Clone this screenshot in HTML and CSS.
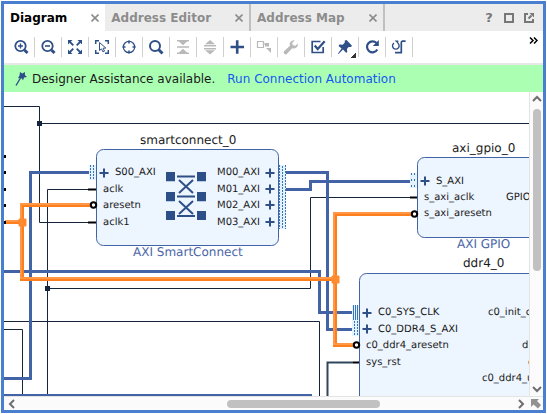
FILE: index.html
```html
<!DOCTYPE html>
<html lang="en">
<head>
<meta charset="utf-8">
<title>Block Design</title>
<link rel="stylesheet" href="styles.css">
</head>
<body>
<main class="panel">
  <header class="tabbar">
    <div class="tab tab-active"><button class="tab-name">Diagram</button><button class="close" aria-label="Close Diagram"><svg width="8" height="8"><path d="M.5 .5l7 7M7.500 .5l-7 7"/></svg></button></div>
    <div class="tab"><button class="tab-name">Address Editor</button><button class="close" aria-label="Close Address Editor"><svg width="8" height="8"><path d="M.5 .5l7 7M7.500 .5l-7 7"/></svg></button></div>
    <div class="tab"><button class="tab-name">Address Map</button><button class="close" aria-label="Close Address Map"><svg width="8" height="8"><path d="M.5 .5l7 7M7.500 .5l-7 7"/></svg></button></div>
    <div class="window-tools">
      <button aria-label="Help">?</button>
      <button aria-label="Maximize"><svg width="10" height="10"><path d="M1 1h8v8H1z"/></svg></button>
      <button aria-label="Float"><svg width="10" height="10"><path d="M4 1H1v8h8V6M4.500 5.500l3-3"/><path class="solid" d="M5.500 0H10v4.500z"/></svg></button>
    </div>
  </header>

  <div class="toolbar" role="toolbar" aria-label="Diagram tools">
    <button class="tool" aria-label="Zoom in"><svg viewBox="0 0 20 20"><circle cx="9.500" cy="9" r="5.200" stroke-width="1.800"/><path d="M7 9h5M9.500 6.500v5" stroke-width="1.400"/><path d="M13.500 13l3 3" stroke-width="3"/></svg></button>
    <button class="tool" aria-label="Zoom out"><svg viewBox="0 0 20 20"><circle cx="9.500" cy="9" r="5.200" stroke-width="1.800"/><path d="M7 9h5" stroke-width="1.600"/><path d="M13.500 13l3 3" stroke-width="3"/></svg></button>
    <button class="tool" aria-label="Zoom fit"><svg viewBox="0 0 20 20"><path class="solid" d="M3 3h4.500L3 7.500zM17 3v4.500L12.500 3zM3 17v-4.500L7.500 17zM17 17h-4.500l4.500-4.500z"/><path d="M4 4l4.300 4.300M16 4l-4.300 4.300M4 16l4.300-4.300M16 16l-4.300-4.300" stroke-width="1.800"/></svg></button>
    <button class="tool" aria-label="Select area"><svg viewBox="0 0 20 20"><path d="M3.700 7V3.700H7M13 3.700h3.300V7M16.300 13v3.300H13M7 16.300H3.700V13" stroke-width="1.500"/><path d="M7.500 5.500v8l2-1.600 1.500 3 1.500-.8-1.400-2.800 2.700-.3z" stroke-width="1"/></svg></button>
    <button class="tool" aria-label="Center selection"><svg viewBox="0 0 20 20"><circle cx="10" cy="10" r="5.700" stroke-width="1.200"/><path d="M10 3.500v3M10 13.500v3M3.500 10h3M13.500 10h3" stroke-width="1.600"/></svg></button>
    <button class="tool" aria-label="Search"><svg viewBox="0 0 20 20"><circle cx="9" cy="9" r="5" stroke-width="2"/><path d="M12.500 12.500l4 4" stroke-width="3"/></svg></button>
    <button class="tool" aria-label="Collapse" disabled><svg viewBox="0 0 20 20"><path d="M4 10h12" stroke-width="1.500"/><path class="solid" d="M4 3h12v1.500h-2L10 8.300 6 4.500H4zM4 17h12v-1.500h-2L10 11.700 6 15.500H4z"/></svg></button>
    <button class="tool" aria-label="Expand" disabled><svg viewBox="0 0 20 20"><path d="M4 8.800h12M4 11.800h12" stroke-width="1.500"/><path class="solid" d="M10 3l5 4.300H5zM10 17.500l5-4.300H5z"/></svg></button>
    <button class="tool" aria-label="Add IP"><svg viewBox="0 0 20 20"><path d="M3.500 10h13.500M10.200 3.300v13.500" stroke-width="2.600"/></svg></button>
    <button class="tool" aria-label="Add module" disabled><svg viewBox="0 0 20 20"><path d="M3.500 4.500h6v6h-6zM9.500 7h2" stroke-width="1.200"/><path class="solid" d="M11 6h4v3.500h-4zM12 11h5v5l-1.700-1.700-1.300-1.300z"/></svg></button>
    <button class="tool" aria-label="Customize block" disabled><svg viewBox="0 0 20 20"><path class="solid" d="M12.800 3.200a4.200 4.200 0 0 0-3.900 5.600L3.300 14a1.900 1.900 0 0 0 2.700 2.700l5.200-5.500a4.200 4.200 0 0 0 5.700-4.600l-2.500 2.200-2.600-.6-.6-2.500 2.500-2.300z"/></svg></button>
    <button class="tool" aria-label="Validate design"><svg viewBox="0 0 20 20"><path d="M12.500 4.500h-8.300v11h11V10" stroke-width="1.700"/><path d="M6.700 8.500l3 3.500 7-7.700" stroke-width="2.200"/></svg></button>
    <button class="tool tool-menu" aria-label="Pin blocks"><svg viewBox="0 0 20 20"><path class="solid" d="M9.800 3.500L11.500 3l5.300 5.500-.6 1.600-2.600-.1-1.700 2 .4 3-1.200.8-3.100-3.200L3.500 17 3 16.400l3.600-4.900-3-2.600.8-1.300 3.300.1 2-2z"/></svg></button>
    <button class="tool" aria-label="Regenerate layout"><svg viewBox="0 0 20 20"><path d="M14.500 6A5.500 5.500 0 1 0 15.300 12.500" stroke-width="2.200"/><path class="solid" d="M16.800 3v6h-6z"/></svg></button>
    <button class="tool" aria-label="Optimize routing"><svg viewBox="0 0 20 20"><path d="M8.800 6.200A3.300 3.300 0 1 1 5 6.100" stroke-width="1.400"/><path class="solid" d="M5.500 3.500h3.800V7z"/><path d="M6 15.700h6.300V5.500a1.300 1.300 0 0 1 1.300-1.300h3" stroke-width="1.700"/></svg></button>
    <button class="more" aria-label="More tools"><svg width="9" height="7"><path d="M1 .5l3 3-3 3M5 .5l3 3-3 3"/></svg></button>
  </div>

  <div class="banner">
    <svg class="wand" width="14" height="16"><path class="solid" d="M6 1l2.200 1.500L11 1l-.1 3 2.100 2-2.900.5L9 9.200 7.200 7 4 7.300 5.500 4.600z"/><path d="M6.500 7L2 14.500" stroke-width="1.400"/></svg>
    <span>Designer Assistance available.</span>
    <a href="#">Run Connection Automation</a>
  </div>

  <section class="view">
    <svg class="canvas" role="img" aria-label="Block design diagram">
      <defs>
        <path id="plus" d="M-4.500 0h9M0-4.500v9"/>
      </defs>
      <g transform="translate(-4 -92)">
        <g class="block">
          <rect x="96.500" y="149.500" width="182" height="96" rx="7"/>
          <rect x="417.500" y="157.500" width="200" height="80" rx="7"/>
          <rect x="359.500" y="273.500" width="240" height="200" rx="7"/>
        </g>

        <g class="net">
          <path d="M4 106.500h35.500v116H90M39.500 123.500H529"/>
          <path d="M90 189.500H47.500V396M47.500 288.500h263v-91H411"/>
          <path d="M4 321.500h315.500V396M4 329.500h18.500V396"/>
          <path class="reset" d="M353 362.500h-25.500V396"/>
        </g>
        <path class="joint" d="M37 121h5v5h-5zM45 286h5v5h-5z"/>

        <g class="bus">
          <path d="M89 172.500H30.500v206H4"/>
          <path d="M4 271.500h315.500v41H353"/>
          <path d="M286 172.500h41.500v157H353"/>
          <path d="M286 189.500h24.500v-8H410"/>
          <path class="edge" d="M4 395h308"/>
        </g>

        <g class="selected">
          <path d="M90 205H22v74h313M5 222h17M411 214h-76v131h19"/>
          <path class="shine" d="M90 204H21v74h313M5 221h17M411 213h-77v131h19"/>
          <path class="node" d="M19 219h7v7h-7zM332 276h7v7h-7z"/>
        </g>

        <g class="pin">
          <path d="M88 189.500h8M88 222.500h8M410 197.500h7M353 362.500h6"/>
          <path class="stub" d="M4 156.500h2M4 172.500h2M4 189.500h2M4 205.500h2M4 222.500h2"/>
          <circle cx="93.500" cy="205" r="2.700"/>
          <circle cx="414.500" cy="214" r="2.700"/>
          <circle cx="356.500" cy="345" r="2.700"/>
        </g>

        <g class="bus-port">
          <path class="glow" d="M89 165h7v15h-7zM279 165h7v64h-7zM410 173h7v15h-7zM352 305h7v31h-7z"/>
          <path class="dotted" d="M90.500 165v15M93.500 165v15M279.500 165v64M282.500 166v63M285.500 165v64M354.500 321v15M357.500 321v15"/>
          <path class="sparse" d="M411.500 173v15M414.500 173v15"/>
          <path d="M353.500 305v15M355.500 305v15M357.500 305v15"/>
        </g>

        <g class="plus">
          <use href="#plus" x="104" y="173"/>
          <use href="#plus" x="270" y="173"/>
          <use href="#plus" x="270" y="189"/>
          <use href="#plus" x="270" y="205"/>
          <use href="#plus" x="270" y="222"/>
          <use href="#plus" x="425" y="181"/>
          <use href="#plus" x="367" y="313"/>
          <use href="#plus" x="367" y="329"/>
        </g>

        <g class="crossbar">
          <path class="shade" d="M166 173h9v9h-9zM197 173h9v9h-9zM166 193h9v9h-9zM197 193h9v9h-9z"/>
          <path class="cell" d="M166 172h9v9h-9zM197 172h9v9h-9zM166 192h9v9h-9zM197 192h9v9h-9zM166 211h9v9h-9zM197 211h9v9h-9z"/>
          <path d="M177 176.500h18M177 196.500h18M177 216h18M179 180l14 13M193 180l-14 13M179 201l14 13M193 201l-14 13"/>
        </g>

        <g class="title">
          <text x="140" y="144">smartconnect_0</text>
          <text x="452" y="152">axi_gpio_0</text>
          <text x="463" y="267">ddr4_0</text>
        </g>
        <g class="kind">
          <text x="133" y="256">AXI SmartConnect</text>
          <text x="457" y="248">AXI GPIO</text>
        </g>
        <g class="port">
          <text x="115" y="175">S00_AXI</text>
          <text x="103" y="192">aclk</text>
          <text x="103" y="208">aresetn</text>
          <text x="103" y="225">aclk1</text>
          <text x="217" y="175">M00_AXI</text>
          <text x="217" y="192">M01_AXI</text>
          <text x="217" y="208">M02_AXI</text>
          <text x="217" y="225">M03_AXI</text>
          <text x="436" y="184">S_AXI</text>
          <text x="424" y="200">s_axi_aclk</text>
          <text x="424" y="216">s_axi_aresetn</text>
          <text x="506" y="200">GPIO</text>
          <text x="378" y="315">C0_SYS_CLK</text>
          <text x="378" y="332">C0_DDR4_S_AXI</text>
          <text x="366" y="348">c0_ddr4_aresetn</text>
          <text x="366" y="365">sys_rst</text>
          <text x="488" y="315">c0_init_c</text>
          <text x="522" y="348">d</text>
          <text x="528" y="365">c</text>
          <text x="482" y="381">c0_ddr4_u</text>
        </g>
      </g>
    </svg>

    <div class="scroll scroll-y">
      <button aria-label="Scroll up"><svg width="10" height="8"><path d="M1 6l4-4 4 4"/></svg></button>
      <div class="track"><div class="thumb"></div></div>
      <button aria-label="Scroll down"><svg width="10" height="8"><path d="M1 2l4 4 4-4"/></svg></button>
    </div>
    <div class="scroll scroll-x">
      <button aria-label="Scroll left"><svg width="8" height="10"><path d="M6 1L2 5l4 4"/></svg></button>
      <div class="track"><div class="thumb"></div></div>
      <button aria-label="Scroll right"><svg width="8" height="10"><path d="M2 1l4 4-4 4"/></svg></button>
    </div>
    <button class="corner" aria-label="Show overview"><svg width="10" height="10"><path class="solid" d="M0 0h8L6 2l4 4-3 3.500-4.500-4L0 8z"/></svg></button>
  </section>
</main>
</body>
</html>
```

FILE: styles.css
```css
* { box-sizing: border-box; }

body {
  margin: 0;
  height: 100vh;
  padding: 1px;
  background: #fff;
  color: #1a1a1a;
  font-family: "DejaVu Sans", sans-serif;
  font-size: 12px;
}

button {
  display: flex;
  align-items: center;
  justify-content: center;
  margin: 0;
  padding: 0;
  border: 0;
  background: none;
  color: inherit;
  font: inherit;
}

svg { display: block; fill: none; stroke: currentColor; }
.solid { fill: currentColor; stroke: none; }

.panel {
  display: flex;
  flex-direction: column;
  height: 100%;
  border: 3px solid #4a7fcf;
}

/* Tabs */
.tabbar {
  display: flex;
  height: 27px;
  flex: none;
  background: #ececec;
  color: #8c8c8c;
}
.tab {
  display: flex;
  align-items: center;
  gap: 24px;
  padding: 0 6px;
  border-right: 2px solid #c0c0c0;
  font-weight: bold;
  white-space: nowrap;
}
.tab-name { height: 24px; }
.tab-active { border-right: 0; background: #fff; }
.tab-active .tab-name { color: #000; }
.close svg { stroke-width: 1.6; }
.window-tools {
  display: flex;
  align-items: center;
  gap: 10px;
  margin-left: auto;
  padding-right: 9px;
  color: #777;
  font-size: 13px;
  font-weight: bold;
}
.window-tools button { width: 10px; }
.window-tools svg { stroke-width: 2; }

/* Toolbar */
.toolbar {
  display: flex;
  flex: none;
  height: 34px;
  padding: 6px 5px 6px 4px;
  border-bottom: 2px solid #e8e8e8;
}
.tool {
  position: relative;
  width: 27px;
  height: 20px;
  border-right: 1px solid #d0d0d0;
  color: #2f4f87;
}
.tool:disabled { color: #b9b9b9; }
.tool svg { width: 20px; height: 20px; }
.tool-menu::after {
  content: "";
  position: absolute;
  right: 2px;
  bottom: -1px;
  width: 5px;
  height: 5px;
  background: linear-gradient(135deg, transparent 50%, #333 50%);
}
.more { align-self: flex-start; margin-left: auto; color: #000; }
.more svg { stroke-width: 1.5; }

/* Assistance banner */
.banner {
  display: flex;
  align-items: center;
  flex: none;
  height: 27px;
  padding-left: 10px;
  background: #abffb3;
  white-space: nowrap;
}
.wand { margin-right: 4px; color: #2f4f87; }
.banner a { margin-left: 12px; color: #1557f0; text-decoration: none; }

/* Diagram view */
.view {
  display: grid;
  flex: 1;
  min-height: 0;
  grid-template: minmax(0, 1fr) 14px / minmax(0, 1fr) 14px;
}
.canvas { width: 100%; height: 100%; overflow: hidden; text-rendering: geometricPrecision; }
.block { fill: #edf5ff; stroke: #4263a5; }
.net { stroke: #14253c; }
.net .reset { stroke: #30465c; stroke-width: 2; }
.joint { fill: #14253c; stroke: none; }
.bus { stroke: #4263a5; stroke-width: 3; }
.bus .edge { stroke-width: 2; }
.selected { stroke: #fd7e1c; stroke-width: 4; }
.selected .shine { stroke: #ff9746; stroke-width: 2; }
.selected .node { fill: #ff8a30; stroke: #ff8a30; stroke-width: 1; }
.pin { stroke: #000; stroke-width: 2; }
.pin circle { fill: #fff; }
.pin .stub { stroke-width: 3; }
.bus-port { stroke: #3a73b0; }
.bus-port .glow { fill: #e3f2ff; stroke: none; }
.bus-port .dotted { stroke-dasharray: 2 1; }
.bus-port .sparse { stroke-dasharray: 2 4; }
.plus { stroke: #2f4f87; stroke-width: 2; }
.crossbar { stroke: #2f4f87; stroke-width: 2; }
.crossbar .shade { fill: #b9cce6; stroke: none; }
.crossbar .cell { fill: #2c4f87; stroke: none; }
.canvas text { stroke: none; fill: #1a1a1a; }
.canvas .title text { font-size: 12px; }
.canvas .kind text { font-size: 12px; fill: #4a66a6; }
.canvas .port text { font-size: 10px; }

/* Scrollbars */
.scroll { display: flex; background: #fbfbfb; color: #6e6e6e; }
.scroll svg { stroke-width: 2; }
.scroll button { flex: none; }
.track { display: flex; flex: 1; }
.thumb { border-radius: 4px; background: #c1c1c1; }
.scroll-y { flex-direction: column; border-left: 1px solid #e4e4e4; }
.scroll-y button { height: 14px; }
.scroll-y .track { flex-direction: column; align-items: center; padding: 3px 0; }
.scroll-y .thumb { width: 8px; height: 60%; }
.scroll-x { border-top: 1px solid #e4e4e4; }
.scroll-x button { width: 16px; }
.scroll-x .track { align-items: center; }
.scroll-x .thumb { width: 31%; height: 8px; margin-left: 42%; }
.corner { border-top: 1px solid #e4e4e4; background: #fbfbfb; color: #929292; }
```
